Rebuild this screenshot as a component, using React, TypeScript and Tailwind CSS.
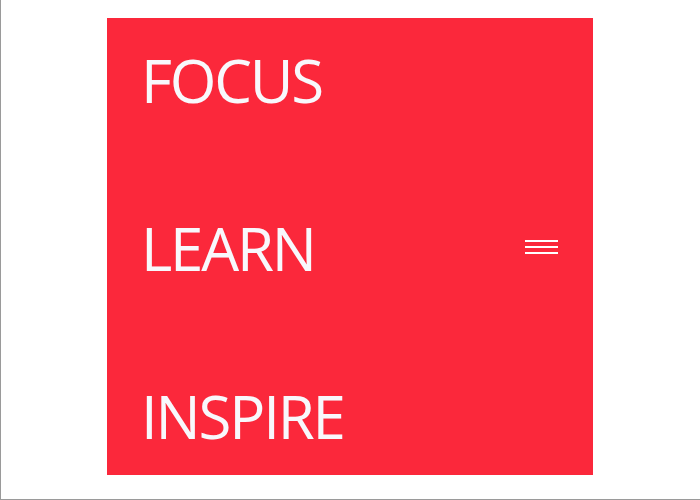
export default function App() {
  return (
    <div className="w-[700px] h-[500px] bg-white border-l border-b border-[#9a9a9a] relative overflow-hidden" style={{ fontFamily: '"Open Sans", sans-serif' }}>
      <div className="ml-[106px] mt-[18px] w-[486px] h-[457px] bg-[#fb283b] flex">
        <div className="flex flex-col pl-[34px] text-[#f8f8fc] text-[60px] leading-none tracking-[-2.2px]">
          <div className="h-[58px] mt-[32px]">FOCUS</div>
          <div className="h-[58px] mt-[110px]">LEARN</div>
          <div className="h-[58px] mt-[110px]">INSPIRE</div>
        </div>
        <div className="flex-1 flex justify-end items-center pr-[35px]">
          <div className="flex flex-col gap-[4px]">
            <div className="w-[33px] h-[2px] bg-white" />
            <div className="w-[33px] h-[2px] bg-white" />
            <div className="w-[33px] h-[2px] bg-white" />
          </div>
        </div>
      </div>
    </div>
  );
}
